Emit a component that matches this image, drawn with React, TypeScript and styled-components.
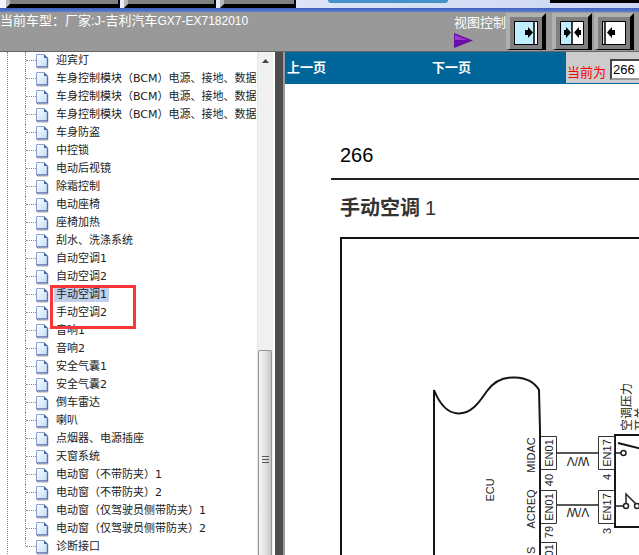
import React from "react";
import styled, { createGlobalStyle } from "styled-components";

const cjk = '"Liberation Sans", "Noto Sans CJK SC", sans-serif';

const GlobalStyle = createGlobalStyle`
  * { box-sizing: border-box; }
  body { margin: 0; background: #fff; font-family: ${cjk}; overflow: hidden; }
`;

const Page = styled.div`
  display: flex;
  flex-direction: column;
  height: 100vh;
  overflow: hidden;
`;

const TopStrip = styled.div`
  display: flex;
  flex: none;
  align-items: flex-start;
  gap: 4px;
  height: 8px;
  padding-left: 6px;
  background: linear-gradient(90deg, #f2f5fd 0%, #dfe5f7 45%, #ccd7f3 100%);
`;

const Tab = styled.div<{ $width: number }>`
  flex: none;
  width: ${(p) => p.$width}px;
  height: 8px;
  background: #808080;
  border-left: 4px solid #b8b8b8;
  border-right: 2px solid #000;
  border-bottom: 4px solid #000;
`;

const Pill = styled.div`
  flex: none;
  width: 120px;
  height: 3px;
  margin-left: 28px;
  background: #4592c8;
  border-radius: 0 0 4px 4px;
`;

const DarkPanel = styled.div`
  flex: 1;
  height: 3px;
  margin-left: 98px;
  background: #000;
`;

const BlueRule = styled.div`
  flex: none;
  height: 4px;
  background: linear-gradient(#3d5fb8, #5b80d6);
`;

const Header = styled.header`
  display: flex;
  flex: none;
  justify-content: space-between;
  height: 40px;
  background: #999;
  border-bottom: 1px solid #666;
  color: #fff;
  font-size: 13px;
  line-height: 18px;
`;

const Vehicle = styled.div`
  white-space: nowrap;
  span { font-size: 12px; }
`;

const ViewTools = styled.div`
  display: flex;
  padding: 1px 5px 0 0;
`;

const ViewLabel = styled.div`
  display: flex;
  flex-direction: column;
  width: 52px;
  padding-top: 1px;
  line-height: 18px;
  white-space: nowrap;
  svg { margin-top: 1px; }
`;

const ViewButton = styled.button<{ $gap: number }>`
  display: block;
  width: 40px;
  height: 37px;
  margin: 0 0 0 ${(p) => p.$gap}px;
  padding: 4px;
  background: #808080;
  border: solid;
  border-width: 4px 4px 1px;
  border-color: #b0b0b0 #000 #000 #b0b0b0;
  svg { display: block; }
`;

const Body = styled.div`
  display: flex;
  flex: 1;
  min-height: 0;
`;

const TreePane = styled.nav`
  flex: none;
  width: 257px;
  padding-left: 7px;
  overflow: hidden;
  background: #fff;
`;

const TreeList = styled.ul`
  margin: 0;
  padding: 0 0 0 17px;
  list-style: none;
  border-left: 1px dotted #888;
`;

const TreeRow = styled.li`
  position: relative;
  display: flex;
  align-items: center;
  height: 18px;
  svg { flex: none; }
`;

const Branch = styled.span<{ $last: boolean }>`
  flex: none;
  align-self: flex-start;
  width: 11px;
  height: ${(p) => (p.$last ? 8 : 18)}px;
  border-left: 1px dotted #888;
  &::after {
    content: "";
    display: block;
    height: 8px;
    border-bottom: 1px dotted #888;
  }
`;

const TreeLink = styled.a<{ $selected: boolean }>`
  margin-left: 5px;
  padding: 0 2px;
  background: ${(p) => (p.$selected ? "#c0d0ec" : "transparent")};
  color: #222;
  font: 11px/14px "DejaVu Sans", "Noto Sans CJK SC", sans-serif;
  text-decoration: none;
  white-space: nowrap;
`;

const Marker = styled.span`
  position: absolute;
  z-index: 1;
  top: -1px;
  left: 25px;
  width: 86px;
  height: 44px;
  border: 3px solid #fc3539;
  pointer-events: none;
`;

const ScrollBar = styled.div`
  display: flex;
  flex: none;
  flex-direction: column;
  width: 16px;
  background: #f0f0f0;
  border-left: 1px solid #e6e6e6;
`;

const ScrollUp = styled.button`
  display: flex;
  justify-content: center;
  align-items: center;
  height: 17px;
  padding: 0;
  border: 0;
  background: transparent;
`;

const Track = styled.div`
  flex: 281;
`;

const Thumb = styled.div`
  display: flex;
  flex: 190;
  flex-direction: column;
  justify-content: center;
  align-items: center;
  margin-right: 1px;
  background: linear-gradient(90deg, #f5f5f5 0%, #e6e6e8 45%, #c5c5c9 100%);
  border: 1px solid #979797;
  border-bottom: 0;
  border-radius: 2px 2px 0 0;
  padding-top: 14px;
`;

const Splitter = styled.div`
  flex: none;
  width: 10px;
  margin-left: 2px;
  background: #4d4d4d;
  border-right: 2px solid #999;
`;

const Content = styled.main`
  display: flex;
  flex: 1;
  flex-direction: column;
  min-width: 0;
  overflow: hidden;
  background: #fff;
`;

const PageBar = styled.div`
  display: flex;
  flex: none;
  justify-content: space-between;
  height: 32px;
  background: #069;
`;

const PageLinks = styled.div`
  display: flex;
  gap: 106px;
  padding: 6px 0 0 2px;
`;

const PageLink = styled.a`
  color: #fff;
  font-size: 13px;
  font-weight: 700;
  line-height: 20px;
  text-decoration: none;
  white-space: nowrap;
`;

const CurrentPage = styled.label`
  display: flex;
  align-items: center;
  width: 73px;
  height: 31px;
  padding: 7px 0 0 1px;
  overflow: hidden;
  background: #ccc;
  color: #f00;
  font-size: 13px;
  white-space: nowrap;
`;

const PageInput = styled.input`
  flex: none;
  width: 40px;
  height: 21px;
  margin: -4px 0 0 4px;
  padding: 0 1px;
  background: #fff;
  border: 2px inset #999;
  border-radius: 0;
  color: #000;
  font: 13px "Liberation Sans", sans-serif;
`;

const Sheet = styled.article`
  padding: 58px 0 0 46px;
  color: #000;
`;

const PageNumber = styled.div`
  padding: 0 0 10px 9px;
  border-bottom: 2px solid #222;
  font-size: 20px;
  line-height: 26px;
`;

const SheetTitle = styled.h1`
  margin: 14px 0 15px 9px;
  color: #333;
  font-size: 20px;
  font-weight: 700;
  line-height: 28px;
  white-space: nowrap;
  span { margin-left: 5px; font-weight: 400; }
`;

const Frame = styled.div`
  margin-left: 9px;
  overflow: hidden;
  border-top: 2px solid #111;
  border-left: 2px solid #111;
  svg { display: block; }
`;

const items = [
  "迎宾灯",
  "车身控制模块（BCM）电源、接地、数据",
  "车身控制模块（BCM）电源、接地、数据",
  "车身控制模块（BCM）电源、接地、数据",
  "车身防盗",
  "中控锁",
  "电动后视镜",
  "除霜控制",
  "电动座椅",
  "座椅加热",
  "刮水、洗涤系统",
  "自动空调1",
  "自动空调2",
  "手动空调1",
  "手动空调2",
  "音响1",
  "音响2",
  "安全气囊1",
  "安全气囊2",
  "倒车雷达",
  "喇叭",
  "点烟器、电源插座",
  "天窗系统",
  "电动窗（不带防夹）1",
  "电动窗（不带防夹）2",
  "电动窗（仅驾驶员侧带防夹）1",
  "电动窗（仅驾驶员侧带防夹）2",
  "诊断接口",
];
const selected = 13;

function PageIcon() {
  return (
    <svg width="13" height="16" viewBox="0 0 13 16" aria-hidden="true">
      <defs>
        <linearGradient id="sheet" x1="0" y1="0" x2="1" y2="1">
          <stop offset="0" stopColor="#fff" />
          <stop offset="1" stopColor="#bfdcf8" />
        </linearGradient>
      </defs>
      <path d="M1 1H8L11.5 4.5V14H1Z" fill="url(#sheet)" />
      <path d="M0.5 14V1.5H8" fill="none" stroke="#8ba3d4" />
      <path d="M0.5 14H11.5V5" fill="none" stroke="#5a70ac" strokeWidth="1.4" />
      <path d="M8 1V5H12Z" fill="#4a64a4" />
      <path d="M1 15.3H12" stroke="#ccc" />
    </svg>
  );
}

type Mode = "right" | "both" | "left";
const dividers: Record<Mode, number> = { right: 20, both: 12, left: 3 };

function ViewIcon({ mode }: { mode: Mode }) {
  const x = dividers[mode];
  return (
    <svg width="24" height="24" viewBox="0 0 24 24" aria-hidden="true">
      <path d="M0 0H24V24H0Z" fill="#000" />
      <path d="M1 1H23V23H1Z" fill="#fff" />
      <path d={`M1 1H${x}V23H1Z`} fill="#bfefff" />
      <path d={`M${x} 0V24`} stroke="#000" strokeWidth="1.5" />
      {mode === "right" && <path d="M11 9H14V6L19 11.5L14 17V14H11Z" />}
      {mode === "both" && <path d="M4 9H6V6L11 11.5L6 17V14H4ZM21 9H19V6L14 11.5L19 17V14H21Z" />}
      {mode === "left" && <path d="M13 9H10V6L5 11.5L10 17V14H13Z" />}
    </svg>
  );
}

function Upright({ x, y, size = 11, anchor = "middle", children }: {
  x: number; y: number; size?: number; anchor?: "middle" | "start"; children: string;
}) {
  return (
    <text transform={`translate(${x} ${y}) rotate(-90)`} fontSize={size} textAnchor={anchor}>
      {children}
    </text>
  );
}

function Schematic() {
  return (
    <svg width="297" height="316" viewBox="342 239 297 316" fontFamily={cjk} fill="#222">
      <g fill="none" stroke="#151515" strokeWidth="2">
        <path d="M434 556V390C440 405 448 413 458 413.500C472 414 480 401 487 391C495 380 505 377 515 377.500C528 378 535 383 539 390L540 430V556" />
        <path d="M640 435H615V527H640" />
        <path d="M618 443L640 448.500" />
      </g>
      <g fill="none" stroke="#333" strokeWidth="1">
        <path d="M540.500 436.500H556.500V469.500H540.500M540.500 490.500H556.500V523.500H540.500M556.500 556V542.500H540.500" />
        <path d="M598.500 436.500H614.500V469.500H598.500ZM598.500 490.500H614.500V523.500H598.500Z" />
      </g>
      <g fill="none" stroke="#222" strokeWidth="1.500">
        <path d="M557 453H598M557 505H598M615 453H621M615 506H623M626 503V494L636 504" />
        <circle cx="623.500" cy="453" r="2.500" />
        <circle cx="626" cy="506" r="2.500" />
        <circle cx="637" cy="506" r="2.500" />
      </g>
      <Upright x={494} y={490}>ECU</Upright>
      <Upright x={535} y={455}>MIDAC</Upright>
      <Upright x={535} y={509}>ACREQ</Upright>
      <Upright x={535} y={554} anchor="start">S</Upright>
      <Upright x={553} y={453}>EN01</Upright>
      <Upright x={553} y={507}>EN01</Upright>
      <Upright x={553} y={558}>EN01</Upright>
      <Upright x={553} y={480}>40</Upright>
      <Upright x={553} y={532}>79</Upright>
      <Upright x={611} y={453}>EN17</Upright>
      <Upright x={611} y={507}>EN17</Upright>
      <Upright x={611} y={477}>4</Upright>
      <Upright x={611} y={531}>3</Upright>
      <text transform="translate(578 457) rotate(180)" fontSize="12" textAnchor="middle">W/V</text>
      <text transform="translate(578 508) rotate(180)" fontSize="12" textAnchor="middle">V/W</text>
      <Upright x={631} y={431} size={12} anchor="start">空调压力</Upright>
      <Upright x={645} y={431} size={12} anchor="start">开关</Upright>
    </svg>
  );
}

export default function App() {
  return (
    <Page>
      <GlobalStyle />
      <TopStrip>
        <Tab $width={114} />
        <Tab $width={92} />
        <Tab $width={76} />
        <Pill />
        <DarkPanel />
      </TopStrip>
      <BlueRule />
      <Header>
        <Vehicle>当前车型：厂家:J-吉利汽车<span>GX7-EX7182010</span></Vehicle>
        <ViewTools>
          <ViewLabel>
            视图控制
            <svg width="19" height="15" viewBox="0 0 19 15" aria-hidden="true">
              <path d="M0 0L19 7.500L0 15Z" fill="#6a0fa8" />
              <path d="M1 2L13 7L1 7Z" fill="#9a3bd6" />
            </svg>
          </ViewLabel>
          <ViewButton $gap={0} aria-label="展开左侧"><ViewIcon mode="right" /></ViewButton>
          <ViewButton $gap={6} aria-label="左右平分"><ViewIcon mode="both" /></ViewButton>
          <ViewButton $gap={2} aria-label="展开右侧"><ViewIcon mode="left" /></ViewButton>
        </ViewTools>
      </Header>
      <Body>
        <TreePane>
          <TreeList>
            {items.map((label, i) => (
              <TreeRow key={i}>
                <Branch $last={i === items.length - 1} />
                <PageIcon />
                <TreeLink href="#" $selected={i === selected}>{label}</TreeLink>
                {i === selected && <Marker />}
              </TreeRow>
            ))}
          </TreeList>
        </TreePane>
        <ScrollBar>
          <ScrollUp aria-label="向上滚动">
            <svg width="7" height="4" viewBox="0 0 7 4"><path d="M0 4L3.500 0L7 4Z" fill="#444" /></svg>
          </ScrollUp>
          <Track />
          <Thumb>
            <svg width="7" height="8" viewBox="0 0 7 8">
              <path d="M0 0.500H7M0 3.500H7M0 6.500H7" stroke="#555" />
            </svg>
          </Thumb>
        </ScrollBar>
        <Splitter />
        <Content>
          <PageBar>
            <PageLinks>
              <PageLink href="#">上一页</PageLink>
              <PageLink href="#">下一页</PageLink>
            </PageLinks>
            <CurrentPage>
              当前为
              <PageInput defaultValue="266" />
            </CurrentPage>
          </PageBar>
          <Sheet>
            <PageNumber>266</PageNumber>
            <SheetTitle>手动空调<span>1</span></SheetTitle>
            <Frame><Schematic /></Frame>
          </Sheet>
        </Content>
      </Body>
    </Page>
  );
}
